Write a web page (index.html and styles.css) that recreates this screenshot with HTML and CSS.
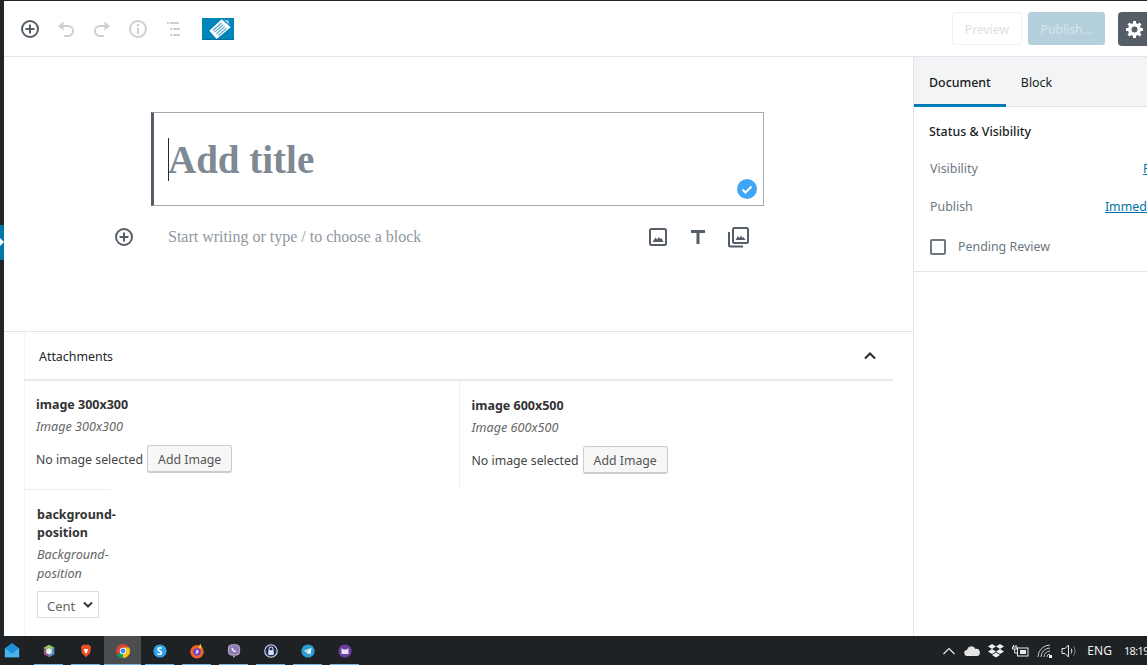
FILE: index.html
```html
<!DOCTYPE html>
<html lang="en">
<head>
    <meta charset="UTF-8">
    <meta name="viewport" content="width=device-width, initial-scale=1.0">
    <title>Add New Post</title>
    <link rel="stylesheet" href="styles.css">
</head>
<body>
    <div id="page">
        <div id="admin-strip"><span class="strip-arrow"></span></div>
        <div id="editor">
            <header id="editor-header">
                <div class="toolbar-left">
                    <button class="icon-button">
                        <svg width="20" height="20" viewBox="0 0 20 20"><circle cx="10" cy="10" r="8" fill="none" stroke="#555d66" stroke-width="2"/><path d="M10 5.500v9M5.500 10h9" stroke="#555d66" stroke-width="2"/></svg>
                    </button>
                    <button class="icon-button">
                        <svg width="20" height="20" viewBox="0 0 20 20"><path d="M3 7h9a5 5 0 0 1 0 10H8" fill="none" stroke="#ccd0d4" stroke-width="2"/><path d="M7.500 2.500v9L2 7z" fill="#ccd0d4"/></svg>
                    </button>
                    <button class="icon-button">
                        <svg width="20" height="20" viewBox="0 0 20 20"><path d="M17 7H8a5 5 0 0 0 0 10h4" fill="none" stroke="#ccd0d4" stroke-width="2"/><path d="M12.500 2.500v9L18 7z" fill="#ccd0d4"/></svg>
                    </button>
                    <button class="icon-button">
                        <svg width="20" height="20" viewBox="0 0 20 20"><circle cx="10" cy="10" r="8" fill="none" stroke="#ccd0d4" stroke-width="2"/><path d="M10 9v6M10 5v2.500" stroke="#ccd0d4" stroke-width="2"/></svg>
                    </button>
                    <button class="icon-button">
                        <svg width="20" height="20" viewBox="0 0 20 20"><path d="M3 4h12M6 10h10M6 16h10" stroke="#ccd0d4" stroke-width="2"/><path d="M5 4h1M8 10h1M8 16h1" stroke="#fff" stroke-width="2"/></svg>
                    </button>
                    <div class="logo">
                        <svg width="32" height="22" viewBox="0 0 32 22"><rect width="32" height="22" fill="#0085ba"/><rect y="21" width="32" height="1" fill="#006c98"/><path d="M7.300 12.700 19.700 1.300 28.700 9.300 14.700 21z" fill="#fff"/><path d="M11 12.500 19.500 5M12.700 14.200 21.200 6.700M14.400 15.900 22.900 8.400M16.100 17.600 24.600 10.100" stroke="#4f9fc4" stroke-width="1.100"/><path d="M22 1.500l4.500 1 1 4.500z" fill="#a9d2e6"/></svg>
                    </div>
                </div>
                <div class="toolbar-right">
                    <button class="preview-button">Preview</button>
                    <button class="publish-button">Publish...</button>
                    <button class="settings-button">
                        <svg width="20" height="20" viewBox="0 0 20 20"><path fill="#fff" d="M18 12h-2.180c-.17.70-.44 1.350-.81 1.930l1.540 1.540-2.100 2.100-1.540-1.540c-.58.360-1.230.640-1.910.810V19H8v-2.180c-.68-.170-1.330-.450-1.910-.810l-1.540 1.540-2.120-2.120 1.540-1.540c-.36-.58-.64-1.220-.81-1.890H1V9h2.180c.17-.70.44-1.350.81-1.930L2.450 5.530l2.100-2.100 1.540 1.540c.58-.36 1.230-.64 1.910-.81V2h3v2.180c.68.170 1.330.450 1.910.810l1.540-1.540 2.120 2.120-1.540 1.540c.36.580.640 1.220.810 1.890H18zm-8.500 1.500a3 3 0 1 0 0-6 3 3 0 0 0 0 6z"/></svg>
                    </button>
                </div>
            </header>
            <div id="editor-body">
                <main id="content">
                    <div class="writing-area">
                        <div class="title-block">
                            <span class="caret"></span>
                            <h1 class="post-title">Add title</h1>
                            <span class="saved-check">
                                <svg width="20" height="20" viewBox="0 0 20 20"><circle cx="10" cy="10" r="10" fill="#3fa5f7"/><path d="M5.500 10.500 8.500 13.500 14.500 7.500" fill="none" stroke="#fff" stroke-width="2"/></svg>
                            </span>
                        </div>
                        <div class="block-row">
                            <button class="block-add">
                                <svg width="20" height="20" viewBox="0 0 20 20"><circle cx="10" cy="10" r="8" fill="none" stroke="#555d66" stroke-width="2"/><path d="M10 5.500v9M5.500 10h9" stroke="#555d66" stroke-width="2"/></svg>
                            </button>
                            <p class="block-hint">Start writing or type / to choose a block</p>
                            <div class="block-shortcuts">
                                <svg width="24" height="24" viewBox="0 0 24 24"><rect x="4" y="4" width="16" height="16" rx="1.500" fill="none" stroke="#555d66" stroke-width="2"/><path d="M6.500 17 9.500 12.500 11 14.500 13 12 14.500 14 15.500 13 17.500 17z" fill="#555d66"/></svg>
                                <svg width="24" height="24" viewBox="0 0 24 24"><path d="M5 5h14v3h-5.500v11h-3V8H5z" fill="#555d66"/></svg>
                                <svg width="24" height="24" viewBox="0 0 24 24"><rect x="7" y="3" width="15" height="15" rx="1.500" fill="none" stroke="#555d66" stroke-width="2"/><path d="M3 7v13.500a1 1 0 0 0 1 1h13" fill="none" stroke="#555d66" stroke-width="2"/><path d="M9.500 15 12 11 13.500 13 15 10.500 16.500 13 17.500 12 19.500 15z" fill="#555d66"/></svg>
                            </div>
                        </div>
                    </div>
                    <section class="meta-box">
                        <div class="meta-inner">
                            <div class="meta-heading">
                                <h2>Attachments</h2>
                                <svg width="20" height="20" viewBox="0 0 20 20"><path d="M5 12.500 10 7.500 15 12.500" fill="none" stroke="#23282d" stroke-width="2"/></svg>
                            </div>
                            <div class="field-grid">
                                <div class="field field-first">
                                    <div class="field-label">image 300x300</div>
                                    <div class="field-desc">Image 300x300</div>
                                    <div class="field-input">No image selected <button class="add-image">Add Image</button></div>
                                </div>
                                <div class="field field-second">
                                    <div class="field-label">image 600x500</div>
                                    <div class="field-desc">Image 600x500</div>
                                    <div class="field-input">No image selected <button class="add-image">Add Image</button></div>
                                </div>
                            </div>
                            <div class="field field-narrow">
                                <div class="field-label">background-position</div>
                                <div class="field-desc">Background-position</div>
                                <div class="select-box"><span>Cent</span><svg width="10" height="7" viewBox="0 0 10 7"><path d="M1 1.500 5 5.500 9 1.500" fill="none" stroke="#32373c" stroke-width="2"/></svg></div>
                            </div>
                        </div>
                    </section>
                </main>
                <aside id="sidebar">
                    <div class="sidebar-tabs">
                        <div class="tab tab-active">Document</div>
                        <div class="tab">Block</div>
                    </div>
                    <div class="panel">
                        <h3>Status &amp; Visibility</h3>
                        <div class="panel-row"><span>Visibility</span><a href="#">Public</a></div>
                        <div class="panel-row"><span>Publish</span><a href="#">Immediately</a></div>
                        <label class="review-row"><span class="checkbox"></span>Pending Review</label>
                    </div>
                </aside>
            </div>
        </div>
    </div>
    <footer id="taskbar">
        <div class="task-icons">
            <div class="task-icon task-large">
                <svg width="18" height="18" viewBox="0 0 18 18"><path d="M1 6 9 0l8 6v10H1z" fill="#1e90d8"/><path d="M1 6l8 6 8-6v10H1z" fill="#49b4ee"/></svg>
            </div>
            <div class="task-icon task-open">
                <svg width="18" height="20" viewBox="0 0 18 20"><path d="M9 1l7.500 4.500v9L9 19 1.500 14.500v-9z" fill="#8d5a78"/><path d="M9 1l7.500 4.500L9 10 1.500 5.500z" fill="#8fc46a"/><path d="M16.500 5.500v9L9 19v-9z" fill="#4a90c8"/><path d="M9 6l4 2.300v4.500L9 15l-4-2.200V8.300z" fill="#eee"/></svg>
            </div>
            <div class="task-icon task-open">
                <svg width="18" height="20" viewBox="0 0 18 20"><path d="M5 1h8l3 3-1 9-6 6-6-6-1-9z" fill="#f1501f"/><path d="M6 7h6l-1.500 5L9 14l-1.500-2z" fill="#fff"/></svg>
            </div>
            <div class="task-icon task-open task-active">
                <svg width="18" height="18" viewBox="0 0 18 18"><circle cx="9" cy="9" r="9" fill="#db4437"/><path d="M9 9 1.200 13.500A9 9 0 0 0 9 18z" fill="#0f9d58"/><path d="M9 9 9 18a9 9 0 0 0 7.800-13.500H9z" fill="#f4c20d"/><path d="M9 9 1.200 13.500A9 9 0 0 0 7 17.800z" fill="#0f9d58"/><circle cx="9" cy="9" r="4.200" fill="#fff"/><circle cx="9" cy="9" r="3.200" fill="#4285f4"/></svg>
            </div>
            <div class="task-icon task-open">
                <svg width="18" height="18" viewBox="0 0 18 18"><circle cx="9" cy="9" r="8.500" fill="#2aa4e8"/></svg>
                <span class="skype-letter">S</span>
            </div>
            <div class="task-icon task-open task-large">
                <svg width="20" height="20" viewBox="0 0 20 20"><circle cx="10" cy="11" r="8.500" fill="#f0622a"/><path d="M10 2c4 1 7 3 8 7l.5 3C18 6 14 3 10 2z" fill="#ffb02e"/><path d="M14 1c1.500 2 2 4 1 6l-3-1z" fill="#ffcb2e"/><circle cx="10" cy="11" r="4.500" fill="#5b3ac8"/><path d="M9 8c3 0 4 2 3 4s-3 2-4 1z" fill="#fff" opacity=".7"/></svg>
            </div>
            <div class="task-icon task-open">
                <svg width="18" height="20" viewBox="0 0 18 20"><rect x="1" y="1" width="16" height="15" rx="5" fill="#8c7bb8" stroke="#ddd" stroke-width="1"/><path d="M8 17v2.500l3-2.500" fill="#ddd"/><path d="M6 5c-1 1-.5 3 1 4.500S10.500 12 12 11l-1.500-2-1 .5L8 8l.5-1z" fill="#fff"/></svg>
            </div>
            <div class="task-icon task-open">
                <svg width="18" height="18" viewBox="0 0 18 18"><circle cx="9" cy="9" r="8" fill="#1d2a55" stroke="#cfd8ee" stroke-width="1.500"/><rect x="5.500" y="8" width="7" height="6" fill="#dfe6f5"/><path d="M6.500 8V6.500a2.500 2.500 0 0 1 5 0V8" fill="none" stroke="#dfe6f5" stroke-width="1.300"/></svg>
            </div>
            <div class="task-icon task-open">
                <svg width="18" height="18" viewBox="0 0 18 18"><circle cx="9" cy="9" r="8.500" fill="#2c9bd6"/><path d="M3.500 9 13.500 5 12 13.500 9 11.500 7.500 13 7.200 10.500 11.500 7 6 10z" fill="#fff"/></svg>
            </div>
            <div class="task-icon task-open">
                <svg width="18" height="18" viewBox="0 0 18 18"><circle cx="9" cy="9" r="8.500" fill="#6b3fa0"/><path d="M4.500 13V5l2.500 2h4l2.500-2v8z" fill="#e8e2f2"/></svg>
            </div>
        </div>
        <div class="tray">
            <svg width="14" height="10" viewBox="0 0 14 10"><path d="M1.500 8 7 2.500 12.500 8" fill="none" stroke="#e8e8e8" stroke-width="1.200"/></svg>
            <svg width="16" height="10" viewBox="0 0 16 10"><path d="M3.500 10a3 3 0 0 1-.5-6 4.500 4.500 0 0 1 8.500-1A3.500 3.500 0 0 1 13 10z" fill="#e4e4e4"/></svg>
            <svg width="16" height="14" viewBox="0 0 16 14"><path d="M4 0 8 2.500 4 5 0 2.500zM12 0l4 2.500L12 5 8 2.500zM4 5l4 2.500L4 10 0 7.500zM12 5l4 2.500-4 2.500-4-2.500zM4 11l4-2.500 4 2.500-4 2.500z" fill="#f0f0f0"/></svg>
            <svg width="17" height="12" viewBox="0 0 17 12"><rect x="5.500" y="3" width="10.500" height="8" fill="none" stroke="#e8e8e8"/><rect x="8" y="5" width="6" height="4" fill="#e8e8e8"/><path d="M1.500 0v2M4 0v2M.5 2h4.500v2H.5zM2.700 4v4h3" fill="none" stroke="#e8e8e8"/></svg>
            <svg width="16" height="14" viewBox="0 0 16 14"><path d="M1 13A12 12 0 0 1 13 1M4 13a9 9 0 0 1 9-9M7 13a6 6 0 0 1 6-6M10 13a3 3 0 0 1 3-3" fill="none" stroke="#c8c8c8"/><rect x="12" y="11" width="3" height="3" fill="#f0f0f0"/></svg>
            <svg width="16" height="14" viewBox="0 0 16 14"><path d="M1 4.500h3L7.500 1v12L4 9.500H1z" fill="none" stroke="#e8e8e8"/><path d="M10 4.500c1 1.500 1 3.500 0 5" fill="none" stroke="#e8e8e8"/><path d="M12.500 2.500c2 3 2 6 0 9" fill="none" stroke="#888"/></svg>
            <span class="tray-lang">ENG</span>
            <span class="tray-time">18:19</span>
        </div>
    </footer>
</body>
</html>
```

FILE: styles.css
```css
html, body {
    height: 100%;
}
body {
    margin: 0;
    height: 665px;
    overflow: hidden;
    display: flex;
    flex-direction: column;
    background: #fff;
    font-family: "Noto Sans", "Open Sans", sans-serif;
    font-size: 12.4px;
    color: #555d66;
}
button {
    font-family: inherit;
}
#page {
    flex: 1;
    display: flex;
    min-height: 0;
    border-top: 1px solid #1e2428;
}
#admin-strip {
    width: 4px;
    flex: none;
    background: #1e2428;
    position: relative;
}
.strip-arrow {
    position: absolute;
    left: 0;
    top: 224px;
    width: 4px;
    height: 35px;
    background: #0077a8;
    overflow: hidden;
}
.strip-arrow::after {
    content: "";
    position: absolute;
    left: -8px;
    top: 12px;
    width: 10px;
    height: 10px;
    background: #fff;
    transform: rotate(45deg);
}
#editor {
    flex: 1;
    min-width: 0;
    display: flex;
    flex-direction: column;
}
#editor-header {
    height: 55px;
    flex: none;
    display: flex;
    justify-content: space-between;
    align-items: center;
    border-bottom: 1px solid #e2e4e7;
}
.toolbar-left {
    display: flex;
    align-items: center;
    padding-left: 8px;
}
.icon-button {
    width: 36px;
    height: 36px;
    padding: 0;
    border: none;
    background: none;
    display: flex;
    align-items: center;
    justify-content: center;
}
.logo {
    display: flex;
    margin-left: 10px;
}
.toolbar-right {
    display: flex;
    align-items: center;
    gap: 6px;
    margin-right: -5px;
}
.preview-button {
    width: 70px;
    height: 33px;
    padding: 2px 0 0;
    background: #fff;
    border: 1px solid #f0f1f2;
    border-radius: 3px;
    color: #dcdfe2;
    font-size: 12.2px;
}
.publish-button {
    width: 77px;
    height: 33px;
    padding: 2px 0 0;
    background: #b4d0dc;
    border: none;
    border-radius: 3px;
    color: #d5e6ee;
    font-size: 12.2px;
}
.settings-button {
    width: 34px;
    height: 34px;
    margin-left: 7px;
    padding: 0;
    background: #555d66;
    border: none;
    border-radius: 4px;
    display: flex;
    align-items: center;
    justify-content: center;
}
#editor-body {
    flex: 1;
    display: flex;
    min-height: 0;
}
#content {
    flex: 1;
    min-width: 0;
    display: flex;
    flex-direction: column;
}
.writing-area {
    height: 274px;
    flex: none;
    padding: 55px 0 0 147px;
    box-sizing: border-box;
}
.title-block {
    position: relative;
    width: 613px;
    height: 94px;
    box-sizing: border-box;
    border: 1px solid #a2aab2;
    border-left: 3px solid #555d66;
    padding: 24px 0 0 14px;
}
.caret {
    position: absolute;
    left: 14px;
    top: 25px;
    width: 1px;
    height: 43px;
    background: #23282d;
}
.post-title {
    margin: 0;
    font-family: "Liberation Serif", serif;
    font-size: 39px;
    line-height: 45px;
    font-weight: bold;
    color: #7e8993;
}
.saved-check {
    position: absolute;
    right: 6px;
    bottom: 6px;
    display: flex;
}
.block-row {
    display: flex;
    align-items: center;
    height: 32px;
    margin-top: 15px;
    margin-left: -37px;
    width: 636px;
}
.block-add {
    width: 20px;
    height: 20px;
    padding: 0;
    border: none;
    background: none;
    display: flex;
    margin-right: 34px;
}
.block-hint {
    margin: 0;
    flex: 1;
    font-family: "Liberation Serif", serif;
    font-size: 16px;
    color: #8f98a1;
}
.block-shortcuts {
    display: flex;
    gap: 16px;
}
.meta-box {
    flex: 1;
    border-top: 1px solid #e2e4e7;
    padding: 0 20px;
    min-height: 0;
}
.meta-inner {
    height: 100%;
    border-left: 1px solid #f5f5f5;
}
.meta-heading {
    height: 47px;
    display: flex;
    justify-content: space-between;
    align-items: center;
    padding: 0 13px 0 15px;
    border-bottom: 2px solid #e8e9ea;
    margin-left: -1px;
}
.meta-heading h2 {
    margin: 2px 0 0;
    font-size: 12.4px;
    font-weight: 400;
    color: #23282d;
}
.field-grid {
    display: flex;
    height: 108px;
}
.field {
    box-sizing: border-box;
}
.field-first {
    width: 434px;
    padding: 15px 12px 0 11px;
}
.field-second {
    width: 435px;
    padding: 16px 12px 0;
    border-left: 1px solid #eeeeee;
}
.field-narrow {
    width: 87px;
    margin-left: -1px;
    padding: 16px 0 0 13px;
    border-top: 1px solid #eeeeee;
}
.field-label {
    font-size: 12.5px;
    font-weight: bold;
    color: #333;
    line-height: 18px;
}
.field-desc {
    font-style: italic;
    color: #666;
    font-size: 12.6px;
    line-height: 19px;
    margin-top: 3px;
}
.field-input {
    margin-top: 9px;
    color: #444;
    font-size: 12.3px;
    display: flex;
    align-items: center;
    gap: 4px;
}
.add-image {
    height: 28px;
    padding: 2px 10px 0;
    background: #f7f7f7;
    border: 1px solid #ccc;
    border-bottom-width: 2px;
    border-radius: 3px;
    color: #555;
    font-size: 12.3px;
}
.select-box {
    width: 46px;
    height: 25px;
    margin-top: 8px;
    border: 1px solid #ddd;
    display: flex;
    align-items: center;
    justify-content: space-between;
    padding: 0 5px 0 9px;
    font-size: 13px;
    color: #666;
}
.select-box span {
    padding-top: 3px;
}
#sidebar {
    width: 280px;
    flex: none;
    margin-right: -46px;
    box-sizing: border-box;
    border-left: 1px solid #e2e4e7;
}
.sidebar-tabs {
    display: flex;
    height: 50px;
    box-sizing: border-box;
    background: #f3f4f5;
    border-bottom: 1px solid #e2e4e7;
}
.tab {
    padding: 0 15px;
    line-height: 52px;
    color: #191e23;
    height: 50px;
    box-sizing: border-box;
}
.tab-active {
    font-weight: 500;
    border-bottom: 3px solid #007cba;
}
.panel {
    padding: 15px 15px 0 16px;
    height: 165px;
    box-sizing: border-box;
    border-bottom: 1px solid #e2e4e7;
}
.panel h3 {
    margin: 0 0 0 -1px;
    font-size: 12.4px;
    font-weight: 500;
    line-height: 20px;
    color: #191e23;
}
.panel-row {
    display: flex;
    justify-content: space-between;
    height: 38px;
    align-items: center;
    color: #6c7781;
}
.panel-row:first-of-type {
    margin-top: 7px;
}
.panel-row a {
    color: #0073aa;
}
.review-row {
    display: flex;
    align-items: center;
    gap: 12px;
    margin-top: 13px;
    color: #6c7781;
}
.checkbox {
    width: 12px;
    height: 12px;
    border: 2px solid #6c7781;
    border-radius: 2px;
}
#taskbar {
    height: 29px;
    flex: none;
    display: flex;
    justify-content: space-between;
    background: #1f2224;
}
.task-icons {
    display: flex;
    margin-left: -7px;
}
.task-icon {
    position: relative;
    width: 37px;
    display: flex;
    align-items: center;
    justify-content: center;
}
.task-icon svg {
    width: 14px;
    height: 14px;
}
.task-large svg {
    width: 16px;
    height: 16px;
}
.task-open::after {
    content: "";
    position: absolute;
    left: 4px;
    right: 4px;
    bottom: 0;
    height: 1px;
    background: #76b9ed;
}
.task-active {
    background: #4b4d4f;
}
.task-active::after {
    left: 0;
    right: 0;
}
.skype-letter {
    position: absolute;
    color: #fff;
    font-weight: bold;
    font-size: 10px;
}
.tray {
    display: flex;
    align-items: center;
    gap: 8px;
    margin-right: -2px;
    color: #f0f0f0;
    font-size: 12px;
}
.tray-lang {
    margin-left: 2px;
}
.tray-time {
    margin-left: 4px;
    font-size: 11px;
    letter-spacing: -0.6px;
}
```
